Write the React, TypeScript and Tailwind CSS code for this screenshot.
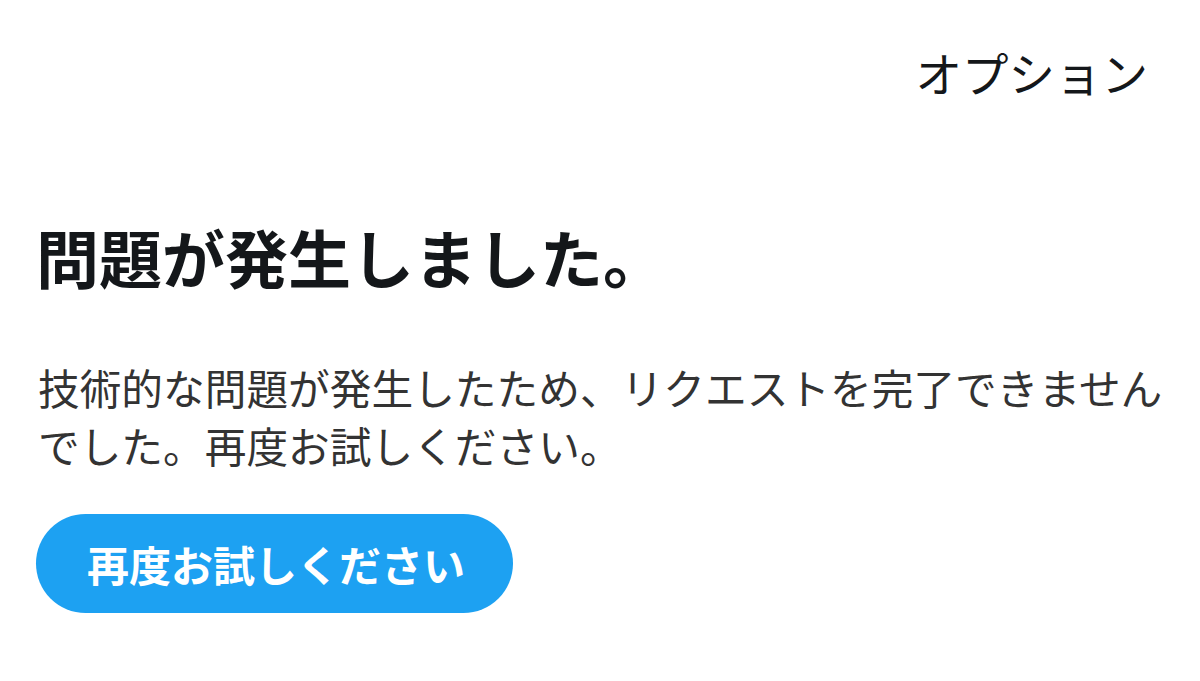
const font = "font-['Noto_Sans_CJK_JP','Noto_Sans',sans-serif]";

export default function App() {
  return (
    <div className={`w-full h-[681px] bg-white overflow-hidden ${font}`}>
      <div className="flex justify-end pr-[52px] pt-[42px]">
        <span className="text-[46.5px] leading-[60px] text-[#14171a]">オプション</span>
      </div>
      <div className="pl-[38px] pt-[118px]">
        <h1 className="text-[63px] leading-[72px] font-bold text-[#14171a] -ml-[2px]">
          問題が発生しました。
        </h1>
        <p className="mt-[66px] w-[1145px] text-[41.7px] leading-[58px] text-[#333333]">
          技術的な問題が発生したため、リクエストを完了できませんでした。再度お試しください。
        </p>
        <button className="mt-[40px] -ml-[2px] h-[99px] w-[477px] rounded-full bg-[#1da1f2] text-white text-[42px] font-bold flex items-center pl-[51px]">
          再度お試しください
        </button>
      </div>
    </div>
  );
}
